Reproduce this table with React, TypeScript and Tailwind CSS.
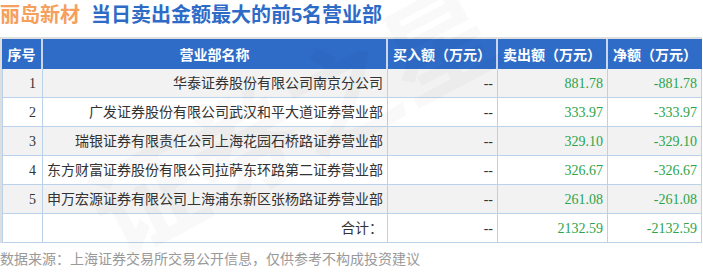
import React from "react";

const rows = [
  { no: "1", name: "华泰证券股份有限公司南京分公司", buy: "--", sell: "881.78", net: "-881.78" },
  { no: "2", name: "广发证券股份有限公司武汉和平大道证券营业部", buy: "--", sell: "333.97", net: "-333.97" },
  { no: "3", name: "瑞银证券有限责任公司上海花园石桥路证券营业部", buy: "--", sell: "329.10", net: "-329.10" },
  { no: "4", name: "东方财富证券股份有限公司拉萨东环路第二证券营业部", buy: "--", sell: "326.67", net: "-326.67" },
  { no: "5", name: "申万宏源证券有限公司上海浦东新区张杨路证券营业部", buy: "--", sell: "261.08", net: "-261.08" },
];

const cols = "grid grid-cols-[41px_345px_110px_110px_94px]";

const App = () => {
  return (
    <div className="relative w-[703px] h-[274px] overflow-hidden bg-white font-['Liberation_Serif','Noto_Sans_CJK_SC',serif]">
      {/* title */}
      <div className="flex items-center h-[28px] pt-[1px] text-[20px] font-bold font-['Liberation_Sans','Noto_Sans_CJK_SC',sans-serif]">
        <span className="text-[#f5a05c]">丽岛新材</span>
        <span className="ml-[11px] text-[#2e6bc7]">当日卖出金额最大的前5名营业部</span>
      </div>

      <div className="mt-[9px] w-[702px] border-t-2 border-l-2 border-[#dedede]">
        {/* header */}
        <div className={`${cols} h-[30px] bg-[#2f6cc8] text-white text-[14px] font-['Noto_Sans_CJK_SC',sans-serif] font-bold`}>
          <div className="flex items-center justify-center border-r-2 border-[#c9d6ec]">序号</div>
          <div className="flex items-center justify-center border-r-2 border-[#c9d6ec]">营业部名称</div>
          <div className="flex items-center justify-center border-r-2 border-[#c9d6ec]">买入额（万元）</div>
          <div className="flex items-center justify-center border-r-2 border-[#c9d6ec]">卖出额（万元）</div>
          <div className="flex items-center justify-center">净额（万元）</div>
        </div>

        {/* body */}
        {rows.map((r, i) => (
          <div
            key={r.no}
            className={`${cols} h-[29px] text-[14px] border-b border-[#b9d1ea] ${i % 2 === 0 ? "bg-[#f2f2f2]" : "bg-white"}`}
          >
            <div className="flex items-center justify-end pr-[6px] text-[#333] border-l border-r border-[#b9d1ea]">{r.no}</div>
            <div className="flex items-center justify-end pr-[4px] text-[#333] border-r border-[#b9d1ea] whitespace-nowrap">{r.name}</div>
            <div className="flex items-center justify-end pr-[4px] text-[#333] border-r border-[#b9d1ea]">{r.buy}</div>
            <div className="flex items-center justify-end pr-[4px] text-[#2ba44a] border-r border-[#b9d1ea]">{r.sell}</div>
            <div className="flex items-center justify-end pr-[4px] text-[#2ba44a] border-r border-[#b9d1ea]">{r.net}</div>
          </div>
        ))}
        <div className={`${cols} h-[29px] text-[14px] border-b border-[#b9d1ea] bg-white`}>
          <div className="border-l border-r border-[#b9d1ea]"></div>
          <div className="flex items-center justify-end pr-[4px] text-[#333] border-r border-[#b9d1ea]">合计：</div>
          <div className="flex items-center justify-end pr-[4px] text-[#333] border-r border-[#b9d1ea]">--</div>
          <div className="flex items-center justify-end pr-[4px] text-[#2ba44a] border-r border-[#b9d1ea]">2132.59</div>
          <div className="flex items-center justify-end pr-[4px] text-[#2ba44a] border-r border-[#b9d1ea]">-2132.59</div>
        </div>
      </div>

      <div className="mt-[7px] text-[14px] leading-[16px] text-[#999] font-['Noto_Sans_CJK_SC',sans-serif]">
        数据来源：上海证券交易所交易公开信息，仅供参考不构成投资建议
      </div>

      {/* watermark */}
      <div
        aria-hidden="true"
        className="pointer-events-none select-none absolute left-[70px] top-[60px] -rotate-[28deg] text-[110px] leading-none font-bold text-black/[0.025] whitespace-nowrap font-['Noto_Sans_CJK_SC',sans-serif]"
      >
        证券之星
      </div>
    </div>
  );
};

export default App;
